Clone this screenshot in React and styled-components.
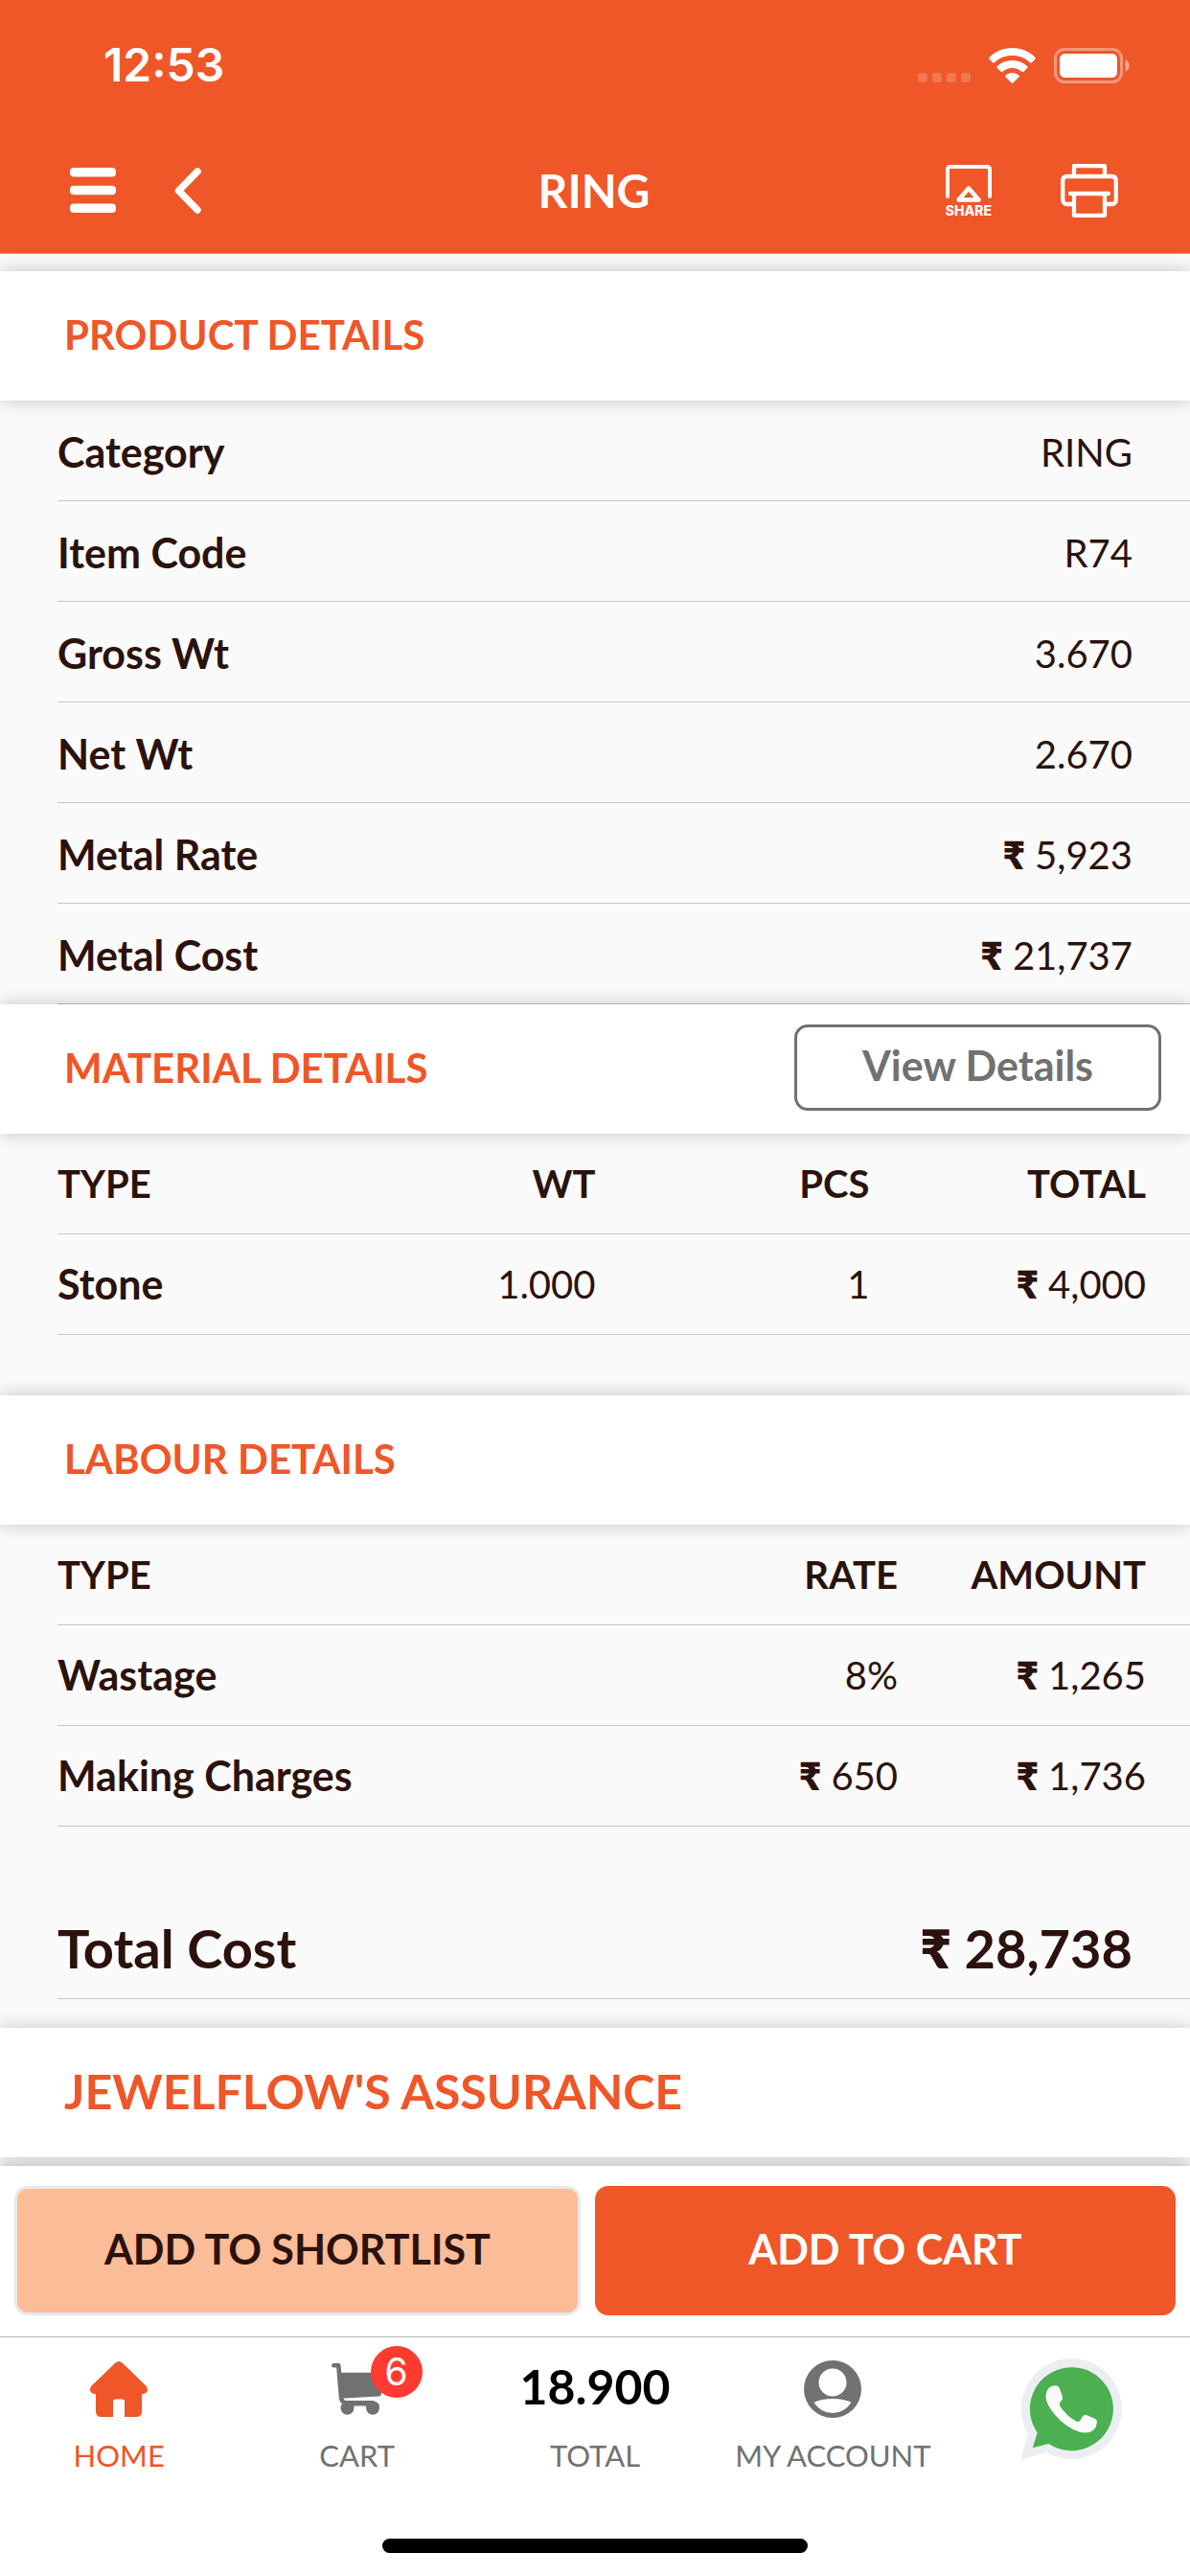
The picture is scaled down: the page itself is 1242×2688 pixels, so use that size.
import React from "react";
import styled, { createGlobalStyle, ThemeProvider } from "styled-components";

const theme = {
  brand: "#ef5628",
  brandSoft: "#fbbc98",
  ink: "#2b120c",
  muted: "#717171",
  line: "#c6c6c8",
  page: "#fafafa",
};

const GlobalStyle = createGlobalStyle`
  *, *::before, *::after { box-sizing: border-box; }
  html, body { margin: 0; padding: 0; }
  body {
    background: ${theme.page};
    color: ${theme.ink};
    font-family: Lato, "Open Sans", sans-serif;
    font-size: 43px;
    line-height: 52px;
  }
  h1, h2, dl, dd, dt, p { margin: 0; font: inherit; }
  button { font-family: inherit; cursor: pointer; }
  svg { display: block; }
`;

const Screen = styled.div`
  display: flex;
  flex-direction: column;
  min-height: 100vh;
`;

const Header = styled.header`
  position: relative;
  z-index: 1;
  background: ${(p) => p.theme.brand};
  border-bottom: 1px solid #a5a5a5;
  color: #fff;
`;

const StatusBar = styled.div`
  display: flex;
  justify-content: space-between;
  align-items: center;
  height: 136px;
  padding: 0 63px 0 108px;
`;

const Clock = styled.time`
  font-family: Inter, sans-serif;
  font-size: 48px;
  font-weight: 600;
`;

const StatusIcons = styled.div`
  display: flex;
  align-items: center;
  gap: 19px;
`;

const SignalDots = styled.div`
  display: flex;
  gap: 5px;
  padding-top: 26px;
`;

const Dot = styled.span`
  width: 10px;
  height: 10px;
  border-radius: 3px;
  background: rgba(255, 255, 255, 0.2);
`;

const TitleBar = styled.div`
  display: grid;
  grid-template-columns: 1fr auto 1fr;
  align-items: center;
  height: 128px;
  padding: 0 75px 3px 73px;
`;

const Actions = styled.div`
  display: flex;
  align-items: center;
  gap: ${(p) => p.$gap}px;
  justify-content: ${(p) => (p.$end ? "flex-end" : "flex-start")};
`;

const Title = styled.h1`
  font-size: 48px;
  font-weight: 700;
`;

const IconButton = styled.button`
  display: flex;
  flex-direction: column;
  align-items: center;
  gap: 3px;
  padding: 0;
  border: 0;
  background: none;
  color: #fff;
`;

const ShareCaption = styled.span`
  font-family: Inter, sans-serif;
  font-size: 14px;
  line-height: 12px;
  font-weight: 800;
`;

const Content = styled.main`
  flex: 1;
  padding: 18px 0 8px;
`;

const SectionBar = styled.div`
  display: flex;
  justify-content: space-between;
  align-items: center;
  height: 135px;
  padding: 0 30px 4px 67px;
  background: #fff;
  box-shadow: 0 0 18px rgba(0, 0, 0, 0.22);
`;

const SectionTitle = styled.h2`
  color: ${(p) => p.theme.brand};
  font-size: ${(p) => (p.$large ? 50 : 42)}px;
  font-weight: 700;
`;

const OutlineButton = styled.button`
  width: 383px;
  height: 90px;
  padding: 0 0 4px;
  border: 3px solid ${(p) => p.theme.muted};
  border-radius: 14px;
  background: #fff;
  color: ${(p) => p.theme.muted};
  font-size: 43px;
  font-weight: 700;
`;

const DetailList = styled.dl`
  padding-left: 60px;
`;

const DetailRow = styled.div`
  display: flex;
  justify-content: space-between;
  align-items: center;
  height: 105px;
  padding-top: ${(p) => (p.$large ? 0 : 3)}px;
  padding-right: 60px;
  border-bottom: 1px solid ${(p) => p.theme.line};
  font-size: ${(p) => (p.$large ? 56 : 43)}px;
`;

const DetailLabel = styled.dt`
  font-weight: 700;
`;

const DetailValue = styled.dd`
  font-size: ${(p) => (p.$large ? 56 : 40)}px;
  font-weight: ${(p) => (p.$large ? 700 : 400)};
`;

const Currency = styled.span`
  font-weight: 800;
`;

const TableWrap = styled.div`
  padding: 0 0 ${(p) => p.$bottom}px 60px;
`;

const DataTable = styled.table`
  width: 100%;
  table-layout: fixed;
  border-collapse: separate;
  border-spacing: 0;
`;

const Column = styled.col`
  width: ${(p) => p.$share}%;
`;

const HeadCell = styled.th`
  height: 105px;
  padding: 0;
  border-bottom: 1px solid ${(p) => p.theme.line};
  font-size: ${(p) => (p.scope === "row" ? 43 : 40)}px;
  font-weight: 700;
  text-align: right;
  &:first-child { text-align: left; }
  &:last-child { padding-right: 46px; }
`;

const DataCell = styled.td`
  height: 105px;
  padding: 0;
  border-bottom: 1px solid ${(p) => p.theme.line};
  font-size: 40px;
  text-align: right;
  &:last-child { padding-right: 46px; }
`;

const TotalBlock = styled.div`
  padding-bottom: 30px;
`;

const Footer = styled.footer`
  background: #fff;
`;

const PurchaseBar = styled.div`
  display: grid;
  grid-template-columns: 39fr 40fr;
  gap: 15px;
  padding: 21px 15px 22px;
  box-shadow: 0 0 9px rgba(0, 0, 0, 0.3);
  clip-path: inset(-20px 0 0 0);
`;

const PurchaseButton = styled.button`
  height: 135px;
  padding: 0 0 4px;
  border: ${(p) => (p.$primary ? "0" : "3px solid #e9e8e7")};
  border-radius: 14px;
  background: ${(p) => (p.$primary ? p.theme.brand : p.theme.brandSoft)};
  color: ${(p) => (p.$primary ? "#fff" : p.theme.ink)};
  font-size: 43px;
  font-weight: 700;
`;

const TabBar = styled.nav`
  display: flex;
  align-items: flex-start;
  padding-top: 22px;
  border-top: 1px solid #b2b2b2;
`;

const Tab = styled.a`
  flex: 1 1 0;
  display: flex;
  flex-direction: column;
  align-items: center;
  gap: 18px;
  color: ${(p) => (p.$active ? p.theme.brand : p.theme.muted)};
  font-size: 31px;
  line-height: 40px;
  text-decoration: none;
  white-space: nowrap;
`;

const TabIcon = styled.span`
  position: relative;
  display: flex;
  align-items: center;
  height: 63px;
`;

const TabTotal = styled.strong`
  padding-bottom: 5px;
  color: #000;
  font-size: 50px;
  font-weight: 700;
`;

const Badge = styled.span`
  position: absolute;
  left: 41px;
  top: -13px;
  width: 54px;
  height: 54px;
  border-radius: 50%;
  background: #ff3b30;
  color: #fff;
  font-family: Inter, sans-serif;
  font-size: 39px;
  line-height: 54px;
  text-align: center;
`;

const HomeIndicator = styled.div`
  width: 444px;
  height: 15px;
  margin: 67px auto 24px;
  border-radius: 8px;
  background: #000;
`;

const WifiIcon = () => (
  <svg width="49" height="37" viewBox="0 0 49 37" fill="#fff" aria-hidden="true">
    <path d="M24.500 0C34 0 42 3.600 48.300 9.700q1 1 .1 2L44.900 15.300q-1 .9-2 0C38 10.600 31.700 8.100 24.500 8.100S11 10.600 6.100 15.300q-1 .9-2 0L.6 11.700q-.9-1 .1-2C7 3.600 15 0 24.500 0z" />
    <path d="M24.500 13C30.700 13 36 15.300 40.100 19.100q1 1 0 2L36.500 24.700q-1 .9-2 .1C31.700 22.300 28.400 21 24.500 21S17.300 22.300 14.500 24.800q-1 .8-2-.1L8.900 21.100q-1-1 0-2C13 15.300 18.300 13 24.500 13z" />
    <path d="M24.500 25.900c2.600 0 4.900.9 6.700 2.400q1.200 1 .2 2.100l-5.800 5.800q-1.100 1-2.200 0l-5.800-5.800q-1-1.100.2-2.100c1.800-1.500 4.100-2.400 6.700-2.400z" />
  </svg>
);

const BatteryIcon = () => (
  <svg width="79" height="37" viewBox="0 0 79 37" aria-hidden="true">
    <rect x="1.500" y="1.500" width="69" height="34" rx="9.500" fill="none" stroke="#fff" strokeOpacity=".4" strokeWidth="3" />
    <rect x="6" y="6" width="60" height="25" rx="5.500" fill="#fff" />
    <path d="M74.500 12c2.700 1.300 4 3.600 4 6.500s-1.300 5.200-4 6.500z" fill="#fff" fillOpacity=".5" />
  </svg>
);

const MenuIcon = () => (
  <svg width="48" height="48" viewBox="0 0 48 48" fill="currentColor" aria-hidden="true">
    <rect y="0" width="48" height="9.500" rx="4" />
    <rect y="18.700" width="48" height="9.500" rx="4" />
    <rect y="37.500" width="48" height="9.500" rx="4" />
  </svg>
);

const BackIcon = () => (
  <svg width="28" height="48" viewBox="0 0 28 48" fill="none" stroke="currentColor" strokeWidth="7.500" strokeLinecap="round" strokeLinejoin="round" aria-hidden="true">
    <path d="M24 4L4.500 24 24 44" />
  </svg>
);

const ShareIcon = () => (
  <svg width="48" height="39" viewBox="0 0 48 39" fill="none" stroke="currentColor" strokeWidth="4" strokeLinecap="round" strokeLinejoin="round" aria-hidden="true">
    <path d="M2 33V5q0-3 3-3H43q3 0 3 3V33" />
    <path d="M24 24.500L34.500 36.500H13.500z" strokeWidth="4.500" />
  </svg>
);

const PrintIcon = () => (
  <svg width="60" height="56" viewBox="0 0 60 56" fill="none" stroke="currentColor" strokeWidth="4.300" strokeLinejoin="round" aria-hidden="true">
    <path d="M14 13V2.200H46V13" />
    <path d="M14 42H7q-4.800 0-4.800-4.800V17.800Q2.200 13 7 13H53q4.800 0 4.800 4.800V37.200Q57.800 42 53 42H46" />
    <path d="M14 31V53.800H46V31" />
    <path d="M10 31H50" strokeLinecap="round" />
  </svg>
);

const HomeIcon = () => (
  <svg width="60" height="58" viewBox="0 0 60 58" fill="currentColor" aria-hidden="true">
    <path d="M26.500 1.500q3.500-3 7 0L58.300 25.500Q60.500 28 59.800 31 58.800 33.700 55.500 34H54V52q0 6-6 6H36V42q0-2.500-2.500-2.500h-7Q24 39.500 24 42V58H12q-6 0-6-6V34H4.500Q1.200 33.700.2 31-.5 28 1.700 25.500z" />
  </svg>
);

const CartIcon = () => (
  <svg width="54" height="54" viewBox="14 26 54 54" fill="currentColor" aria-hidden="true">
    <path d="M16.300 28.300H21.300L24 61q.5 6.200 5 6.200H57" fill="none" stroke="currentColor" strokeWidth="4.600" strokeLinecap="round" strokeLinejoin="round" />
    <path d="M23 35.700H66V58q0 2.300-2.300 2.400L28 62.600q-3 0-3.700-2.600z" />
    <path d="M27 66H58q5 0 6 5L30 71z" />
    <circle cx="30.500" cy="72.800" r="7" />
    <circle cx="57" cy="72.800" r="7" />
    <path d="M28.500 64L63 61.800" fill="none" stroke="#fff" strokeWidth="1.600" strokeLinecap="round" />
    <path d="M38 70.500H49.500V74H38z" fill="#fff" />
  </svg>
);

const AccountIcon = () => (
  <svg width="60" height="60" viewBox="0 0 60 60" aria-hidden="true">
    <circle cx="30" cy="30" r="30" fill="currentColor" />
    <circle cx="30" cy="23" r="14.500" fill="#fff" />
    <path d="M10.500 44Q18.500 40 30 40T49.500 44Q42 55 30 55T10.500 44z" fill="#fff" />
  </svg>
);

const WhatsAppIcon = () => (
  <svg width="106" height="106" viewBox="13.500 10.500 106 106" role="img" aria-label="WhatsApp">
    <path d="M14 116L21.200 89A52.500 52.500 0 1 1 41 108.700z" fill="#eceff1" />
    <path d="M26.300 103.700L31.200 88A43.500 43.500 0 1 1 43 99.500z" fill="#4caf50" />
    <path d="M50 38.700Q53 38.700 54 41L57.300 50Q58.300 53 55.500 55.500 53.300 57.800 54.700 60 61 70 71.500 76 74.300 77.500 76 75L78.500 71Q80 68.500 83 69.700L91.500 73.500Q94 75 93.300 78 92 88 80.500 88 69 87.500 55.500 75.500 40 60.500 40 49.500 40.500 39 50 38.700z" fill="#fafafa" />
  </svg>
);

const Rupees = ({ children }) => (
  <>
    <Currency>₹</Currency> {children}
  </>
);

const productDetails = [
  ["Category", "RING"],
  ["Item Code", "R74"],
  ["Gross Wt", "3.670"],
  ["Net Wt", "2.670"],
  ["Metal Rate", <Rupees>5,923</Rupees>],
  ["Metal Cost", <Rupees>21,737</Rupees>],
];

const materialTable = {
  shares: [24, 23.5, 24.2, 28.3],
  head: ["TYPE", "WT", "PCS", "TOTAL"],
  rows: [["Stone", "1.000", "1", <Rupees>4,000</Rupees>]],
};

const labourTable = {
  shares: [50, 24.2, 25.8],
  head: ["TYPE", "RATE", "AMOUNT"],
  rows: [
    ["Wastage", "8%", <Rupees>1,265</Rupees>],
    ["Making Charges", <Rupees>650</Rupees>, <Rupees>1,736</Rupees>],
  ],
};

const CostTable = ({ table, label, bottom }) => (
  <TableWrap $bottom={bottom}>
    <DataTable aria-label={label}>
      <colgroup>
        {table.shares.map((share, i) => (
          <Column key={i} $share={share} />
        ))}
      </colgroup>
      <thead>
        <tr>
          {table.head.map((name) => (
            <HeadCell key={name} scope="col">{name}</HeadCell>
          ))}
        </tr>
      </thead>
      <tbody>
        {table.rows.map(([name, ...cells]) => (
          <tr key={name}>
            <HeadCell scope="row">{name}</HeadCell>
            {cells.map((cell, i) => (
              <DataCell key={i}>{cell}</DataCell>
            ))}
          </tr>
        ))}
      </tbody>
    </DataTable>
  </TableWrap>
);

export default function App() {
  return (
    <ThemeProvider theme={theme}>
      <GlobalStyle />
      <Screen>
        <Header>
          <StatusBar>
            <Clock>12:53</Clock>
            <StatusIcons>
              <SignalDots>
                <Dot />
                <Dot />
                <Dot />
                <Dot />
              </SignalDots>
              <WifiIcon />
              <BatteryIcon />
            </StatusIcons>
          </StatusBar>
          <TitleBar>
            <Actions $gap={61}>
              <IconButton aria-label="Menu"><MenuIcon /></IconButton>
              <IconButton aria-label="Back"><BackIcon /></IconButton>
            </Actions>
            <Title>RING</Title>
            <Actions $gap={72} $end>
              <IconButton>
                <ShareIcon />
                <ShareCaption>SHARE</ShareCaption>
              </IconButton>
              <IconButton aria-label="Print"><PrintIcon /></IconButton>
            </Actions>
          </TitleBar>
        </Header>

        <Content>
          <SectionBar>
            <SectionTitle>PRODUCT DETAILS</SectionTitle>
          </SectionBar>
          <DetailList>
            {productDetails.map(([name, value]) => (
              <DetailRow key={name}>
                <DetailLabel>{name}</DetailLabel>
                <DetailValue>{value}</DetailValue>
              </DetailRow>
            ))}
          </DetailList>

          <SectionBar>
            <SectionTitle>MATERIAL DETAILS</SectionTitle>
            <OutlineButton>View Details</OutlineButton>
          </SectionBar>
          <CostTable table={materialTable} label="Material details" bottom={63} />

          <SectionBar>
            <SectionTitle>LABOUR DETAILS</SectionTitle>
          </SectionBar>
          <CostTable table={labourTable} label="Labour details" bottom={75} />

          <TotalBlock>
            <DetailList>
              <DetailRow $large>
                <DetailLabel>Total Cost</DetailLabel>
                <DetailValue $large><Rupees>28,738</Rupees></DetailValue>
              </DetailRow>
            </DetailList>
          </TotalBlock>

          <SectionBar>
            <SectionTitle $large>JEWELFLOW'S ASSURANCE</SectionTitle>
          </SectionBar>
        </Content>

        <Footer>
          <PurchaseBar>
            <PurchaseButton>ADD TO SHORTLIST</PurchaseButton>
            <PurchaseButton $primary>ADD TO CART</PurchaseButton>
          </PurchaseBar>
          <TabBar>
            <Tab href="#home" $active>
              <TabIcon><HomeIcon /></TabIcon>
              HOME
            </Tab>
            <Tab href="#cart">
              <TabIcon>
                <CartIcon />
                <Badge>6</Badge>
              </TabIcon>
              CART
            </Tab>
            <Tab href="#total">
              <TabIcon><TabTotal>18.900</TabTotal></TabIcon>
              TOTAL
            </Tab>
            <Tab href="#account">
              <TabIcon><AccountIcon /></TabIcon>
              MY ACCOUNT
            </Tab>
            <Tab href="#whatsapp">
              <WhatsAppIcon />
            </Tab>
          </TabBar>
          <HomeIndicator />
        </Footer>
      </Screen>
    </ThemeProvider>
  );
}
